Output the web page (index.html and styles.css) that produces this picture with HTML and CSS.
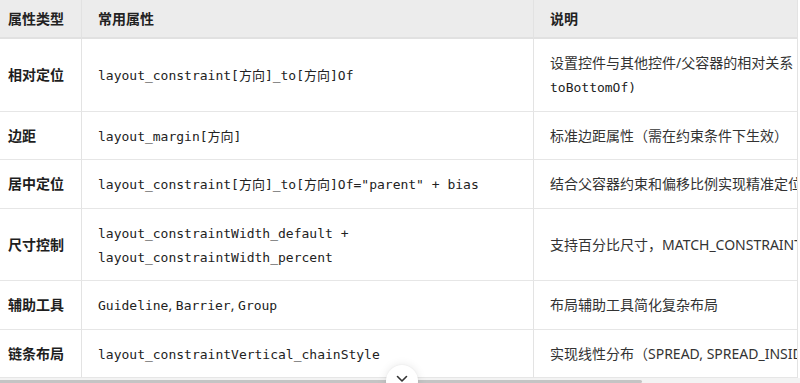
FILE: index.html
```html
<!DOCTYPE html>
<html lang="zh-CN">
<head>
<meta charset="utf-8">
<title>ConstraintLayout 属性</title>
<link rel="stylesheet" href="styles.css">
</head>
<body>
<div class="page">
  <div class="scroller">
    <table class="attr-table">
      <colgroup>
        <col class="c1"><col class="c2"><col class="c3">
      </colgroup>
      <thead>
        <tr><th>属性类型</th><th>常用属性</th><th>说明</th></tr>
      </thead>
      <tbody>
        <tr>
          <td class="type">相对定位</td>
          <td><code>layout_constraint[方向]_to[方向]Of</code></td>
          <td class="desc">设置控件与其他控件/父容器的相对关系（如 <code>layout_constraintTop_</code><br><code>toBottomOf)</code></td>
        </tr>
        <tr>
          <td class="type">边距</td>
          <td><code>layout_margin[方向]</code></td>
          <td class="desc">标准边距属性（需在约束条件下生效）</td>
        </tr>
        <tr>
          <td class="type">居中定位</td>
          <td><code>layout_constraint[方向]_to[方向]Of="parent" + bias</code></td>
          <td class="desc">结合父容器约束和偏移比例实现精准定位</td>
        </tr>
        <tr>
          <td class="type">尺寸控制</td>
          <td><code>layout_constraintWidth_default +</code><br><code>layout_constraintWidth_percent</code></td>
          <td class="desc">支持百分比尺寸，MATCH_CONSTRAINT 等模式</td>
        </tr>
        <tr>
          <td class="type">辅助工具</td>
          <td><code>Guideline</code>, <code>Barrier</code>, <code>Group</code></td>
          <td class="desc">布局辅助工具简化复杂布局</td>
        </tr>
        <tr>
          <td class="type">链条布局</td>
          <td><code>layout_constraintVertical_chainStyle</code></td>
          <td class="desc">实现线性分布（SPREAD, SPREAD_INSIDE, PACKED）</td>
        </tr>
      </tbody>
    </table>
  </div>
  <div class="hscroll"><div class="thumb"></div></div>
  <button class="more" aria-label="展开">
    <svg width="12" height="8" viewBox="0 0 12 8"><path d="M1.5 1.5 L6 6 L10.5 1.5" fill="none" stroke="#333" stroke-width="1.6" stroke-linecap="round" stroke-linejoin="round"/></svg>
  </button>
</div>
</body>
</html>
```

FILE: styles.css
```css
html, body {
  margin: 0;
  padding: 0;
  background: #fff;
}
body {
  font-family: "Noto Sans", "Noto Sans CJK SC", sans-serif;
  font-size: 14px;
  color: #2a2a2a;
}
.page {
  position: relative;
  width: 800px;
  height: 383px;
  overflow: hidden;
  display: flex;
  flex-direction: column;
}
.scroller {
  width: 797px;
  height: 378px;
  overflow: hidden;
  border-right: 1px solid #e3e3e3;
  flex: none;
}
.attr-table {
  table-layout: fixed;
  border-collapse: separate;
  border-spacing: 0;
  width: 994px;
}
.c1 { width: 82px; }
.c2 { width: 452px; }
.c3 { width: 460px; }
th, td {
  text-align: left;
  vertical-align: middle;
  padding: 12px 16px 11.5px 16px;
  line-height: 24px;
  height: 24px;
  border-bottom: 1px solid #e6e6e6;
  border-right: 1px solid #e3e3e3;
  white-space: nowrap;
  overflow: hidden;
}
th:first-child, td:first-child {
  padding-left: 8px;
}
th:last-child, td:last-child {
  border-right: none;
}
thead th {
  background: #ececec;
  font-weight: 700;
  color: #222;
  padding-top: 7px;
  padding-bottom: 6px;
  border-bottom: 2px solid #e1e1e1;
  border-right-color: #e2e2e2;
}
td.type {
  font-weight: 700;
  color: #1e1e1e;
}
td.desc {
  color: #333;
}
code {
  font-family: "DejaVu Sans Mono", "Noto Sans CJK SC", monospace;
  font-size: 13px;
  line-height: 1;
  color: #222;
}
.hscroll {
  flex: 1;
  background: #f3f3f3;
  display: flex;
  align-items: flex-end;
}
.thumb {
  width: 642px;
  height: 3px;
  background: #c4c4c4;
  border-radius: 0 2px 2px 0;
}
.more {
  position: absolute;
  left: 386px;
  top: 365px;
  width: 32px;
  height: 32px;
  border-radius: 50%;
  border: none;
  background: #fff;
  box-shadow: 0 0 10px rgba(0,0,0,0.10), 0 0 2px rgba(0,0,0,0.06);
  display: flex;
  align-items: flex-start;
  justify-content: center;
  padding: 10px 0 0 0;
}
```
